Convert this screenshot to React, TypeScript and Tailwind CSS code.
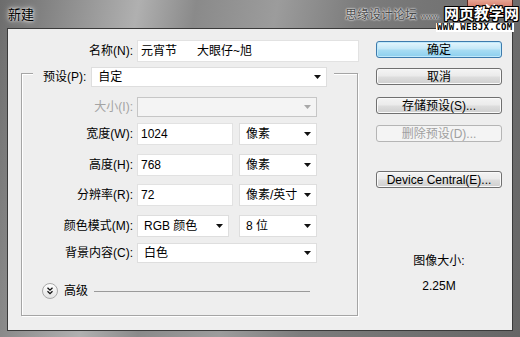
import React from "react";

const Arrow = ({ disabled = false }: { disabled?: boolean }) => (
  <svg width="7" height="4" viewBox="0 0 7 4" className="shrink-0">
    <path d="M0 0H7L3.5 4Z" fill={disabled ? "#a8a8a8" : "#111"} />
  </svg>
);

const Dropdown = ({
  text,
  w,
  h = "h-[20px]",
  disabled = false,
}: {
  text: string;
  w: string;
  h?: string;
  disabled?: boolean;
}) => (
  <div
    className={`${w} ${h} flex items-center justify-between pl-[6px] pr-[5px] border ${
      disabled ? "bg-[#f4f4f4] border-[#c6c6c6]" : "bg-white border-[#dedede]"
    }`}
  >
    <span className="text-[12px] leading-none text-black">{text}</span>
    <Arrow disabled={disabled} />
  </div>
);

const Input = ({ text, w }: { text: string; w: string }) => (
  <div className={`${w} h-[22px] flex items-center pl-[3px] bg-white border border-[#e2e2e2]`}>
    <span className="text-[12px] leading-none text-black whitespace-pre">{text}</span>
  </div>
);

const Label = ({ text, w = "w-[111px]", gray = false }: { text: string; w?: string; gray?: boolean }) => (
  <div className={`${w} text-right text-[12px] leading-none ${gray ? "text-[#a3a3a3]" : "text-black"}`}>{text}</div>
);

const Button = ({
  text,
  mt,
  kind = "normal",
}: {
  text: string;
  mt: string;
  kind?: "normal" | "default" | "disabled";
}) => {
  const cls =
    kind === "default"
      ? "border-[#3d7bad] bg-[linear-gradient(#e5f6fd_0%,#c4e8f8_45%,#a7dcf3_55%,#8ccfee_100%)] text-black shadow-[inset_0_0_0_1px_#bfe9fb]"
      : kind === "disabled"
      ? "border-[#b5b5b5] bg-[#f4f4f4] text-[#a0a0a0]"
      : "border-[#707070] bg-[linear-gradient(#f4f4f4_0%,#ebebeb_45%,#dddddd_55%,#cfcfcf_100%)] text-black shadow-[inset_0_0_0_1px_#fafafa]";
  return (
    <div
      className={`${mt} w-[126px] h-[17px] rounded-[3px] border flex items-center justify-center text-[12px] leading-none ${cls}`}
    >
      {text}
    </div>
  );
};

export default function App() {
  return (
    <div className="w-[520px] h-[337px] overflow-hidden flex flex-col font-['Liberation_Sans','Noto_Sans_CJK_SC',sans-serif] bg-[linear-gradient(100deg,#6c6c6c_0%,#8e8e8e_12%,#b0b0b0_24%,#8a8a8a_34%,#9c9c9c_48%,#7c7c7c_62%,#666666_100%)]">
      {/* title bar */}
      <div className="relative h-[28px] shrink-0 flex items-start">
        <div className="pl-[8px] pt-[7px] text-[13px] leading-[16px] text-black [text-shadow:0_0_6px_#fff,0_0_3px_#fff]">
          新建
        </div>
        <div className="ml-auto mr-[7px] w-[46px] h-[18px] rounded-b-[4px] border border-t-0 border-[#5a2a22] bg-[linear-gradient(#e8a493_0%,#d47a68_45%,#c2402c_55%,#d0553d_100%)] flex items-center justify-center">
          <svg width="11" height="9" viewBox="0 0 11 9">
            <path d="M1 0.5L10 8.5M10 0.5L1 8.5" stroke="#fff" strokeWidth="2" />
          </svg>
        </div>
        {/* watermark overlay */}
        <div className="absolute left-[345px] top-[8px] flex items-baseline text-[#4a4a4a] [text-shadow:0_0_2px_#fff,0_0_2px_#fff]">
          <span className="text-[12px] leading-[15px]">思缘设计论坛</span>
          <span className="ml-[4px] text-[8px] leading-none">www.</span>
        </div>
        <div className="absolute left-[444px] top-[5px] text-[15px] leading-[17px] text-white font-bold [text-shadow:1px_0_0_#000,-1px_0_0_#000,0_1px_0_#000,0_-1px_0_#000,1px_1px_0_#000,-1px_-1px_0_#000,1px_-1px_0_#000,-1px_1px_0_#000]">
          网页教学网
        </div>
        <div className="absolute left-[436px] top-[23px] px-[1px] bg-white text-[9px] leading-[9px] font-bold tracking-[0.4px] text-black font-['DejaVu_Sans_Mono',monospace]">
          WWW.WEBJX.COM
        </div>
      </div>

      {/* client area */}
      <div className="mx-[7px] mb-[6px] flex-1 border border-[#3a3a3a] bg-[#eeeeee] flex">
        {/* left column */}
        <div className="w-[352px] flex flex-col">
          <div className="mt-[11px] flex items-center">
            <Label text="名称(N):" w="w-[125px]" />
            <div className="ml-[4px]">
              <Input text={"元宵节      大眼仔~旭"} w="w-[222px]" />
            </div>
          </div>

          {/* group box */}
          <div className="mt-[11px] ml-[13px] w-[337px] border border-[#a5a5a5] shadow-[inset_1px_1px_0_#fff,1px_1px_0_#fff] flex flex-col pb-[16px]">
            <div className="-mt-[7px] ml-[11px] w-fit flex items-center bg-[#eeeeee] pl-[10px] pr-[7px]">
              <div className="text-[12px] leading-none text-black">预设(P):</div>
              <div className="ml-[5px]">
                <Dropdown text="自定" w="w-[236px]" />
              </div>
            </div>

            <div className="mt-[10px] flex items-center">
              <Label text="大小(I):" gray />
              <div className="ml-[4px]">
                <Dropdown text="" w="w-[180px]" disabled />
              </div>
            </div>

            <div className="mt-[6px] flex items-center">
              <Label text="宽度(W):" />
              <div className="ml-[4px]">
                <Input text="1024" w="w-[96px]" />
              </div>
              <div className="ml-[6px]">
                <Dropdown text="像素" w="w-[78px]" h="h-[22px]" />
              </div>
            </div>

            <div className="mt-[9px] flex items-center">
              <Label text="高度(H):" />
              <div className="ml-[4px]">
                <Input text="768" w="w-[96px]" />
              </div>
              <div className="ml-[6px]">
                <Dropdown text="像素" w="w-[78px]" h="h-[22px]" />
              </div>
            </div>

            <div className="mt-[8px] flex items-center">
              <Label text="分辨率(R):" />
              <div className="ml-[4px]">
                <Input text="72" w="w-[96px]" />
              </div>
              <div className="ml-[6px]">
                <Dropdown text="像素/英寸" w="w-[78px]" h="h-[22px]" />
              </div>
            </div>

            <div className="mt-[9px] flex items-center">
              <Label text="颜色模式(M):" />
              <div className="ml-[4px]">
                <Dropdown text="RGB 颜色" w="w-[92px]" h="h-[22px]" />
              </div>
              <div className="ml-[10px]">
                <Dropdown text="8 位" w="w-[78px]" h="h-[22px]" />
              </div>
            </div>

            <div className="mt-[6px] flex items-center">
              <Label text="背景内容(C):" />
              <div className="ml-[4px]">
                <Dropdown text="白色" w="w-[180px]" />
              </div>
            </div>

            <div className="mt-[20px] ml-[20px] flex items-center h-[16px]">
              <svg width="16" height="16" viewBox="0 0 16 16" className="shrink-0">
                <defs>
                  <linearGradient id="cg" x1="0" y1="0" x2="0" y2="1">
                    <stop offset="0" stopColor="#ffffff" />
                    <stop offset="1" stopColor="#e2e2e2" />
                  </linearGradient>
                </defs>
                <circle cx="8" cy="8" r="7.5" fill="url(#cg)" stroke="#a8a8a8" />
                <path d="M5.5 4.8L8 7.2L10.5 4.8M5.5 8.3L8 10.7L10.5 8.3" fill="none" stroke="#111" strokeWidth="1.3" />
              </svg>
              <span className="ml-[6px] text-[12px] leading-none text-black">高级</span>
              <div className="ml-[6px] w-[216px] h-px bg-[#9a9a9a]" />
            </div>
          </div>
        </div>

        {/* right column */}
        <div className="ml-[16px] w-[126px] flex flex-col items-center">
          <Button text="确定" mt="mt-[12px]" kind="default" />
          <Button text="取消" mt="mt-[10px]" />
          <Button text="存储预设(S)..." mt="mt-[12px]" />
          <Button text="删除预设(D)..." mt="mt-[11px]" kind="disabled" />
          <Button text="Device Central(E)..." mt="mt-[29px]" />
          <div className="mt-[66px] text-[12px] leading-[15px] text-black">图像大小:</div>
          <div className="mt-[10px] text-[12px] leading-[15px] text-black">2.25M</div>
        </div>
      </div>
    </div>
  );
}
